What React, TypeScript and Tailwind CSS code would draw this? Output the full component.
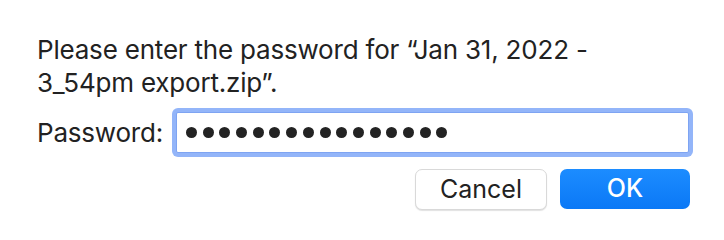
const dots = Array.from({ length: 16 });

const App = () => {
  return (
    <div
      className="h-[240px] w-[724px] bg-white pl-[37px] pr-[31px] pt-[33px] text-[#222]"
      style={{ fontFamily: "Inter, 'Liberation Sans', sans-serif" }}
    >
      <p className="text-[26px] leading-[33px] tracking-[-0.2px]">
        Please enter the password for “Jan 31, 2022 -
        <br />
        3_54pm export.zip”.
      </p>

      <div className="mt-[9px] flex items-center">
        <label className="w-[135px] shrink-0 text-[26px] leading-[33px] tracking-[-0.2px]">
          Password:
        </label>
        <div className="h-[49px] w-[521px] rounded-[6px] bg-[#93b5f9] p-[4px]">
          <div className="flex h-full items-center gap-[5.7px] rounded-[2px] border border-[#7ea4f2] bg-white pl-[9px]">
            {dots.map((_, i) => (
              <span key={i} className="h-[11px] w-[11px] rounded-full bg-[#232323]" />
            ))}
          </div>
        </div>
      </div>

      <div className="mr-[3px] mt-[12px] flex justify-end gap-[13px]">
        <button className="h-[41px] w-[132px] rounded-[7px] border border-[#d9d9d9] bg-white text-[25px] text-[#222] shadow-[0_1px_1px_rgba(0,0,0,0.12)]">
          Cancel
        </button>
        <button className="h-[40px] w-[130px] rounded-[7px] bg-gradient-to-b from-[#1c8cff] to-[#0a78f6] text-[25px] font-medium text-white">
          OK
        </button>
      </div>
    </div>
  );
};

export default App;
